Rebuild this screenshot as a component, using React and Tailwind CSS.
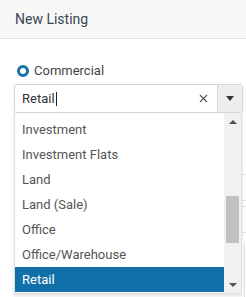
import { X } from "lucide-react";

const options = [
  "Investment",
  "Investment Flats",
  "Land",
  "Land (Sale)",
  "Office",
  "Office/Warehouse",
  "Retail",
];

const App = () => {
  return (
    <div className="w-[246px] h-[297px] overflow-hidden bg-white relative font-['Roboto',sans-serif]">
      {/* Header */}
      <div className="h-[39px] bg-[#f7f7f7] border-b border-[#e3e3e3] px-[15px] flex items-center">
        <h1 className="text-[14px] text-[#3b4654] leading-none">New Listing</h1>
      </div>

      <div className="px-[14px] pt-[24px]">
        {/* Radio */}
        <div className="flex items-center gap-[5px] pl-[3px] h-[16px]">
          <span className="w-[12px] h-[12px] rounded-full border-[3px] border-[#1672a8] bg-white" />
          <span className="text-[13px] text-[#444]">Commercial</span>
        </div>

        {/* Select input */}
        <div className="relative mt-[5px]">
          <div className="flex h-[29px] w-[229px] border border-[#d6d6d6] rounded-[3px] shadow-sm">
            <div className="flex-1 flex items-center pl-[7px] text-[13px] text-[#333]">
              Retail<span className="w-px h-[14px] bg-[#222] ml-px" />
            </div>
            <div className="w-[20px] mr-[4px] flex items-center justify-center text-[#555]">
              <X size={13} strokeWidth={2} />
            </div>
            <div className="w-[25px] bg-[#eeeeee] border-l border-[#d6d6d6] flex items-center justify-center">
              <span className="w-0 h-0 border-l-[4px] border-r-[4px] border-t-[5px] border-l-transparent border-r-transparent border-t-[#333]" />
            </div>
          </div>

          {/* Background fields peeking out */}
          <div className="mt-[61px] ml-[200px] h-px w-[40px] bg-[#e4e4e4]" />
          <div className="mt-[25px] ml-[200px] h-px w-[40px] bg-[#e4e4e4]" />
          <div className="mt-[5px] ml-[200px] h-px w-[40px] bg-[#e4e4e4]" />
          <div className="mt-[25px] ml-[200px] h-px w-[40px] bg-[#e4e4e4]" />
          <div className="mt-[10px] ml-[230px] h-[60px] w-px bg-[#e4e4e4]" />

          {/* Dropdown list */}
          <div className="absolute left-0 top-[29px] w-[228px] h-[181px] bg-white border-x border-b border-[#e0e0e0] shadow-[0_2px_4px_rgba(0,0,0,0.12)] flex">
            <ul className="flex-1 pt-[4px]">
              {options.map((opt) => (
                <li
                  key={opt}
                  className={
                    opt === "Retail"
                      ? "h-[25px] flex items-center px-[7px] text-[13px] bg-[#1170a8] text-white"
                      : "h-[25px] flex items-center px-[7px] text-[13px] text-[#555]"
                  }
                >
                  {opt}
                </li>
              ))}
            </ul>
            <div className="w-[17px] bg-[#f1f1f1] flex flex-col items-center">
              <div className="h-[17px] flex items-center justify-center">
                <span className="w-0 h-0 border-l-[4px] border-r-[4px] border-b-[4px] border-l-transparent border-r-transparent border-b-[#505050]" />
              </div>
              <div className="mt-[66px] w-[13px] h-[47px] bg-[#c1c1c1]" />
              <div className="flex-1" />
              <div className="h-[17px] flex items-center justify-center">
                <span className="w-0 h-0 border-l-[4px] border-r-[4px] border-t-[4px] border-l-transparent border-r-transparent border-t-[#505050]" />
              </div>
            </div>
          </div>
        </div>
      </div>
    </div>
  );
};

export default App;
